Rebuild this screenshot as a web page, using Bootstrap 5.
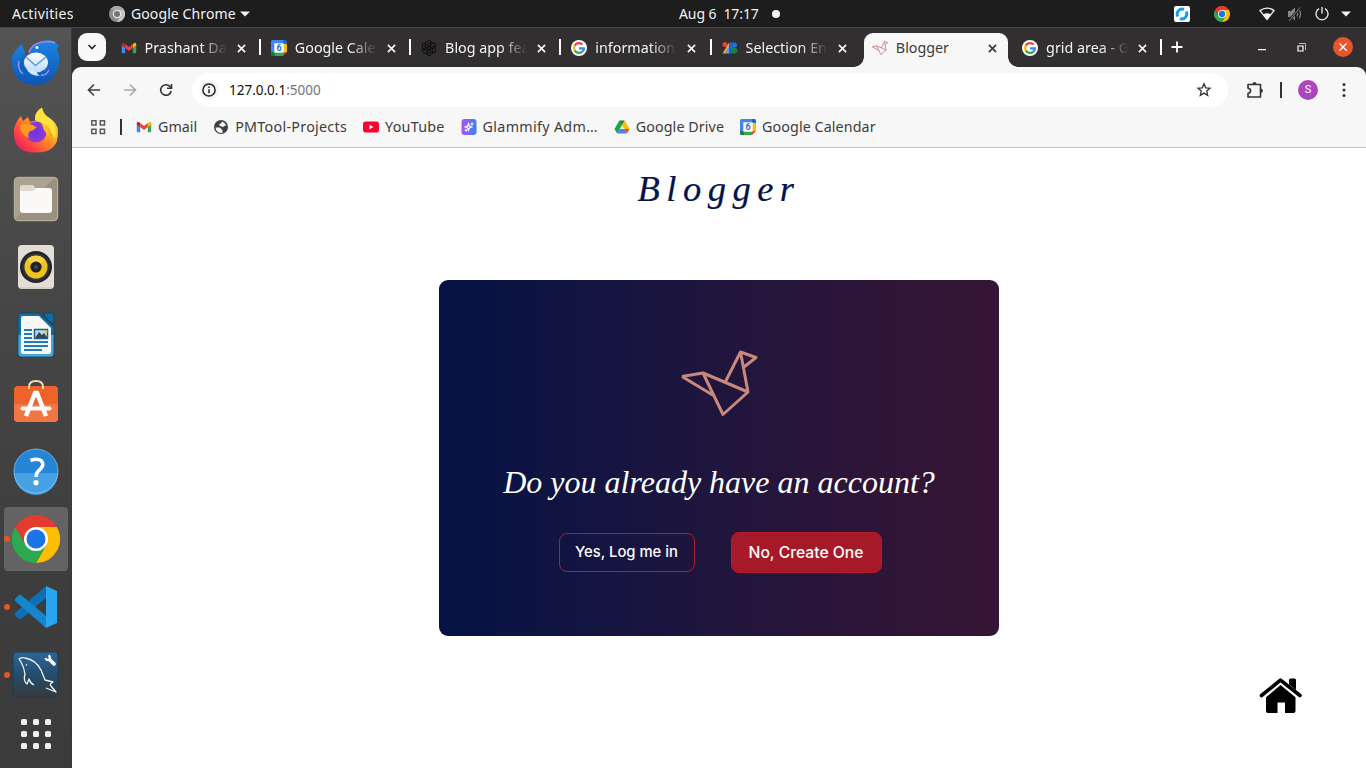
<!DOCTYPE html>
<html lang="en">
<head>
<meta charset="utf-8">
<meta name="viewport" content="width=device-width, initial-scale=1">
<title>Blogger</title>
<link href="https://cdn.jsdelivr.net/npm/bootstrap@5.3.0/dist/css/bootstrap.min.css" rel="stylesheet">
<style>
body{width:1366px;height:768px;overflow:hidden;font-family:"Noto Sans","Open Sans",sans-serif;font-size:14.3px;line-height:20px;color:#3c3c3c;background:#fff}
svg{display:block;flex:none}
.topbar{height:28px;background:#1d1d1d;color:#f2f2f2;border-bottom:1px solid #434343;padding-left:12px;font-size:14px}
.topbar .wide{letter-spacing:.35px}
.tray{width:196px}
.dock{width:72px;height:740px;background:linear-gradient(#545454,#484848 30%,#3d3d3d 75%,#3b3b3b);padding-top:1px;border-right:1px solid #383838}
.dock-item{height:68px;width:72px;position:relative}
.dock-item.hot::before{content:"";position:absolute;left:4px;top:2px;width:64px;height:64px;border-radius:4px;background:#636363}
.dock-item.run::after{content:"";position:absolute;left:4px;top:31px;width:6px;height:6px;border-radius:50%;background:#e95420}
.dock-item svg{position:relative}
.apps{height:50px}
.tabstrip{height:39px;background:#322f30;padding-left:6px;color:#f3f3f3}
.chev{width:28px;height:28px;border-radius:9px;background:#f8f8f8;margin:5px 6.6px 0 0}
.tab{width:144.25px;height:34px;margin-top:5px;padding:0 8px 4px;position:relative}
.tab .ttl{width:90px;margin:0 -10px 0 8px;white-space:nowrap}
.tab .fade-end{-webkit-mask-image:linear-gradient(90deg,#000 55px,transparent 82px);mask-image:linear-gradient(90deg,#000 55px,transparent 82px)}
.tab svg.x{margin-left:12px}
.tab.on{background:#f7f7f7;color:#3c3c3c;border-radius:9px 9px 0 0}
.tab.on::before,.tab.on::after{content:"";position:absolute;bottom:0;width:10px;height:10px}
.tab.on::before{left:-10px;background:radial-gradient(circle at 0 0,transparent 9.5px,#f7f7f7 10px)}
.tab.on::after{right:-10px;background:radial-gradient(circle at 100% 0,transparent 9.5px,#f7f7f7 10px)}
.gapbar{width:6px;height:16px;margin-top:11px;background:linear-gradient(#fff,#fff) center/2px 100% no-repeat}
.gapbar.off{background:none}
.winbtn{height:28px;margin-top:5px}
.toolbar-wrap{background:#322f30}
.toolrow{height:46px;background:#f7f7f7;border-radius:9px 9px 0 0;padding:0 15px 0 14px}
.omni{width:1036px;height:34px;border-radius:17px;background:#fff;margin-left:18px;padding:0 16px 0 7px}
.info{width:20px;height:20px;border-radius:50%;background:#f4f4f4}
.url{font-size:13.5px;margin-left:10px;color:#111}
.url span{color:#757575}
.vbar{width:2px;height:16px;background:#333}
.avatar{width:20px;height:20px;border-radius:50%;background:#ab47bc;color:#fff;font:11px/20px Roboto,sans-serif}
.marks{height:35px;background:#f7f7f7;border-bottom:1px solid #c4c4c4;padding:0 0 6px 18px}
.bm{margin-right:16px;white-space:nowrap}
.bm svg{margin-right:6px}
.ls-a{letter-spacing:.28px}
.ls-b{letter-spacing:.24px}
.ls-c{letter-spacing:.32px}
.ls-d{letter-spacing:.08px}
.sheet{height:620px;position:relative}
.brandline{font:italic 36.500px/46px "Liberation Serif",serif;letter-spacing:6.500px;color:#04134a;padding-top:18px;-webkit-text-stroke:.2px #04134a}
.ask{width:560px;height:356px;margin:68px auto 0;border-radius:9px;background:linear-gradient(90deg,#041344,#1c153f 42%,#2a1539 70%,#371534)}
.ask svg{margin-top:66px}
.question{font:italic 32px/40px "Liberation Serif",serif;color:#fff;margin:42px 0 0;white-space:nowrap}
.choices{gap:36px;margin:30px 0 0 2px}
.btn-pop{font-family:Inter,sans-serif;font-weight:500;color:#fff;border:1px solid #b41c2b;border-radius:8px;padding:0;white-space:nowrap}
.btn-yes{width:136px;height:39px;font-size:14.8px}
.btn-no{width:151px;height:41px;font-size:15.7px;background:#a61928}
.btn-pop:hover{color:#fff}
.home{position:absolute;left:1187px;top:529px}
</style>
</head>
<body>
<svg width="0" height="0" class="position-absolute" aria-hidden="true">
<defs>
<symbol id="chrome" viewBox="0 0 48 48"><path fill="#e33b2e" d="M3.2 12A24 24 0 0 1 44.8 12H24L13.6 30z"/><path fill="#fdbd00" d="M44.8 12A24 24 0 0 1 24 48L34.4 30 24 12z"/><path fill="#2da94f" d="M24 48A24 24 0 0 1 3.2 12L13.6 30 34.4 30z"/><circle cx="24" cy="24" r="12" fill="#fff"/><circle cx="24" cy="24" r="9.5" fill="#1a73e8"/></symbol>
<symbol id="gmail" viewBox="0 0 16 16"><path fill="#4285f4" d="M.8 5v7.3q0 1 1 1H4.200V7.500z"/><path fill="#34a853" d="M15.200 5v7.300q0 1-1 1H11.800V7.500z"/><path fill="#fbbc04" d="M11.800 4 13.300 2.900q1.900-.8 1.900 1.300V5.500L11.800 8z"/><path fill="#c5221f" d="M4.200 4 2.700 2.900Q.8 2.100.8 4.200V5.500L4.200 8z"/><path fill="#ea4335" d="M4.200 4 8 6.900 11.800 4V8L8 10.900 4.200 8z"/></symbol>
<symbol id="gcal" viewBox="0 0 16 16"><path fill="#4285f4" d="M1.500 0H12V4H4v8H0V1.500Q0 0 1.500 0z"/><path fill="#1967d2" d="M12 0h2.500Q16 0 16 1.500V4h-4z"/><path fill="#fbbc04" d="M12 4h4v8h-4z"/><path fill="#34a853" d="M4 12h8v4H4z"/><path fill="#188038" d="M0 12h4v4H1.500Q0 16 0 14.500z"/><path fill="#ea4335" d="M12 12h4l-4 4z"/><path fill="#fff" d="M3.300 3.300h9.400v9.400H3.300z"/><text x="8" y="11.400" font-size="9" font-weight="700" text-anchor="middle" fill="#1a73e8" font-family="Roboto,sans-serif">6</text></symbol>
<symbol id="goog" viewBox="0 0 16 16"><circle cx="8" cy="8" r="8" fill="#fff"/><g fill="none" stroke-width="2.300"><path stroke="#ea4335" d="M3.700 5.600A4.900 4.900 0 0 1 11.400 4.500"/><path stroke="#fbbc05" d="M3.700 10.400a4.900 4.900 0 0 1 0-4.800"/><path stroke="#34a853" d="M11.300 11.600a4.900 4.900 0 0 1-7.600-1.200"/><path stroke="#4285f4" d="M8 8.300h4.900a4.900 4.900 0 0 1-1.600 3.300"/></g></symbol>
<symbol id="bird" viewBox="0 0 76 66" overflow="visible"><path fill="none" stroke="currentColor" stroke-width="var(--w,3)" stroke-linejoin="round" d="M1 26.500 22 23 67 42 42 64.500 22 23M1 26.500 32.500 45.500M44 32.500 59.500 2 67 42M59.500 2 75 7.500 63 17"/></symbol>
<symbol id="x" viewBox="0 0 10 10"><path fill="none" stroke="currentColor" stroke-width="1.900" d="m1 1 8 8M9 1 1 9"/></symbol>
<linearGradient id="fx" x1="1" y1="0" x2="0" y2="1"><stop offset="0" stop-color="#fff36b"/><stop offset=".4" stop-color="#ffa51e"/><stop offset=".7" stop-color="#ff4b3b"/><stop offset="1" stop-color="#e5097c"/></linearGradient>
<radialGradient id="pu"><stop offset="0" stop-color="#6a35dd"/><stop offset="1" stop-color="#8f3bd6"/></radialGradient>
<linearGradient id="tb" x1="0" y1="0" x2="0" y2="1"><stop offset="0" stop-color="#1a86e6"/><stop offset="1" stop-color="#0e55ae"/></linearGradient>
<linearGradient id="en" x1="0" y1="0" x2="0" y2="1"><stop offset="0" stop-color="#fff"/><stop offset="1" stop-color="#b9dcfa"/></linearGradient>
<linearGradient id="my" x1="0" y1="0" x2="0" y2="1"><stop offset="0" stop-color="#2c6798"/><stop offset=".55" stop-color="#234a69"/><stop offset="1" stop-color="#39393a"/></linearGradient>
<linearGradient id="gl"><stop offset="0" stop-color="#a855f7"/><stop offset="1" stop-color="#3b82f6"/></linearGradient>
</defs>
</svg>

<header class="topbar d-flex align-items-center">
  <span class="wide" style="width:97px">Activities</span>
  <svg width="16" height="16" viewBox="0 0 16 16"><circle cx="8" cy="8" r="8" fill="#8d8d8d"/><path fill="#c4c4c4" d="M15 4a8 8 0 0 1-7 12l3.500-6L8 4z"/><path fill="#a9a9a9" d="M1.300 3.600A8 8 0 0 1 15 4H8z"/><circle cx="8" cy="8" r="4.200" fill="#e8e8e8"/><circle cx="8" cy="8" r="3" fill="#737373"/></svg>
  <span style="width:109px;margin-left:6px;letter-spacing:.1px">Google Chrome</span>
  <svg width="10" height="6" viewBox="0 0 10 6"><path fill="#f2f2f2" d="M0 .5h10L5 5.500z"/></svg>
  <span style="margin-left:429px;width:93px;white-space:pre;letter-spacing:-.1px">Aug 6  17:17</span>
  <svg width="8" height="8" viewBox="0 0 8 8"><circle cx="4" cy="4" r="4" fill="#f2f2f2"/></svg>
  <div class="tray ms-auto d-flex align-items-center">
    <svg width="16" height="16" viewBox="0 0 16 16" style="margin-left:4px"><rect width="16" height="16" rx="2" fill="#fff"/><g fill="none" stroke="#159cf0" stroke-width="2.800"><path d="M3.800 10.500A5 5 0 0 1 10 3.400"/><path d="M12.200 5.500A5 5 0 0 1 6 12.600"/></g></svg>
    <svg width="16" height="16" style="margin-left:24px"><use href="#chrome"/></svg>
    <svg width="16" height="14" viewBox="0 0 16 14" style="margin-left:29px"><path fill="none" stroke="#f2f2f2" stroke-width="1.300" d="M1 3.600q7-5 14 0L8 12.500z"/><path fill="#f2f2f2" d="M4.200 7.500q3.800-2.500 7.600 0L8 12.800z"/></svg>
    <svg width="16" height="16" viewBox="0 0 16 16" style="margin-left:12px"><path fill="#858585" d="M1 5h3l4-3.500v13L4 11H1z"/><path fill="none" stroke="#858585" stroke-width="1.200" d="M10 5.500q1.500 2.500 0 5M12 3.500q3 4.500 0 9"/><path stroke="#1d1d1d" stroke-width="2.500" d="M1.500 15 13 2"/><path stroke="#858585" d="M2 15 13 1.500"/></svg>
    <svg width="14" height="14" viewBox="0 0 14 14" style="margin-left:12px"><path fill="none" stroke="#f2f2f2" stroke-width="1.300" d="M4 1.600a6 6 0 1 0 6 0M7 0v6.500"/></svg>
    <svg width="10" height="6" viewBox="0 0 10 6" style="margin-left:12px"><path fill="#f2f2f2" d="M0 .5h10L5 5.500z"/></svg>
  </div>
</header>

<div class="d-flex">
<nav class="dock d-flex flex-column align-items-center flex-shrink-0">
  <div class="dock-item d-flex align-items-center justify-content-center"><svg width="48" height="48" viewBox="0 0 48 48"><path fill="url(#tb)" d="M0 17Q4 10 9 5q4 5 4 11l-1 4 6-5Q19 5 30 2q8-2 15 1l-2 1q3 1 4 4l-2 1q5 13-1 25-6 12-21 12Q6 46 1 31-1 22 0 17z"/><path fill="#0d61bd" d="M12 16q-4 9 2 16 6 7 16 5-10 6-18-1-9-9 0-20z"/><path fill="none" stroke="#9a86ef" stroke-width="1.600" d="M17 14q2-9 13-11 8-1 13 1M7 22q-2 8 4 13M37 31q-3 6-8 5"/><ellipse cx="24" cy="23.500" rx="12" ry="10" fill="url(#en)"/><path fill="#d2e9fd" d="M14 28q2 9 15 9-4-1-4-4z"/><path fill="none" stroke="#5b9bdb" stroke-width="1.400" d="m14 18 9.500 8.500L34 18"/><circle cx="25" cy="8.500" r="1.500" fill="#fff"/></svg></div>
  <div class="dock-item d-flex align-items-center justify-content-center"><svg width="48" height="48" viewBox="0 0 48 48"><path fill="url(#fx)" d="M2 22Q4 14 9 9l2 5 5-4 2 5q2-1 5-1 1-8 7-12.500 1 6 7 9 9 6 9 14 1 21-22 21Q1 46 2 25z"/><path fill="#ffe33d" d="M23 13q-1-8 7-12.500Q31 7 39 13q7 8 4 19l-7-13z"/><circle cx="24" cy="25" r="10.500" fill="url(#pu)"/><path fill="#ff9a1f" d="M8 18q7-2 13 0 2 2 4 2-4 4-7 4-3 3-1 7Q8 28 8 18z"/><path fill="#ffbd2c" d="M29 15q9 5 8 15l-5-7z"/></svg></div>
  <div class="dock-item d-flex align-items-center justify-content-center"><svg width="48" height="48" viewBox="0 0 48 48"><rect x="2.300" y="2.300" width="43.400" height="43.400" rx="4" fill="#9a927f" stroke="#c1baa6"/><path fill="#aaa28f" d="M3 44V6q0-3 3-3h36z"/><rect x="8" y="13" width="32" height="25" rx="3" fill="#faf9f7"/><path fill="#e0dacd" d="M8 16V12q0-2 2-2h10q2 0 2.500 2l1.500 2q-2 2-4 2z"/></svg></div>
  <div class="dock-item d-flex align-items-center justify-content-center"><svg width="48" height="48" viewBox="0 0 48 48"><rect x="6" y="2" width="36" height="44" rx="4" fill="#e3ded3"/><path d="M8 45h32" stroke="#c4beb2"/><circle cx="24" cy="24" r="16" fill="#23232d"/><circle cx="24" cy="24" r="13.500" fill="#34343c"/><circle cx="24" cy="24" r="11.500" fill="#efc21f"/><path fill="#f6d44a" d="M24 24 15 17a11.500 11.500 0 0 1 18 0z"/><circle cx="24" cy="24" r="5.600" fill="#202124"/><circle cx="24" cy="24" r="2" fill="#45484c"/></svg></div>
  <div class="dock-item d-flex align-items-center justify-content-center"><svg width="48" height="48" viewBox="0 0 48 48"><path fill="#0f6ea8" stroke="#174460" d="M9 2h18l15 14v27q0 3-3 3H9q-3 0-3-3V5q0-3 3-3z"/><path fill="#49a6d5" d="M6.500 24h35v18q0 3.500-3 3.500h-29q-3 0-3-3z"/><path fill="#f7f7f7" d="M11 5h16l12 12v24q0 2-2 2H11q-2 0-2-2V7q0-2 2-2z"/><path fill="#106aa0" stroke="#174460" d="M31 2h11v11q-7-3-11-11z"/><path stroke="#1d7db6" stroke-width="2" d="M12 19h8M12 23h8M12 27h8M12 31h24M12 35h24M12 39h18"/><path fill="#b5dcf2" stroke="#16608d" stroke-width="1.500" d="M22.500 18.500h13v9h-13z"/><path fill="#444" d="m23 27 4-6 3 3 2-2 3.500 5z"/><circle cx="34" cy="20.500" r="1.500" fill="#f0c51e"/></svg></div>
  <div class="dock-item d-flex align-items-center justify-content-center"><svg width="48" height="48" viewBox="0 0 48 48"><rect x="2" y="7" width="44" height="36" rx="4" fill="#f0622b"/><path fill="#f27643" d="M2 25h44v14q0 4-4 4H6q-4 0-4-4z"/><path fill="none" stroke="#f3ddac" stroke-width="2" d="M17 10V8q0-6 7-6t7 6v2"/><g fill="none" stroke="#fff" stroke-width="4.500"><path d="M14 37 23 14h2l9 23"/><path stroke-linecap="round" stroke-width="4" d="M10.500 29.500h27"/></g></svg></div>
  <div class="dock-item d-flex align-items-center justify-content-center"><svg width="48" height="48" viewBox="0 0 48 48"><circle cx="24" cy="24" r="22" fill="#2486d4"/><path fill="#46a0e2" d="M2 26h44a22 22 0 0 1-44 0z"/><circle cx="24" cy="24" r="22" fill="none" stroke="#8fc7ef" stroke-width=".7"/><path fill="none" stroke="#fff" stroke-width="3.500" d="M18.500 13.500q6.500-2.500 10.500 0 4 4-1 9-4 3-4 7.500"/><circle cx="24" cy="35.700" r="2.600" fill="#fff"/></svg></div>
  <div class="dock-item run hot d-flex align-items-center justify-content-center"><svg width="48" height="48"><use href="#chrome"/></svg></div>
  <div class="dock-item run d-flex align-items-center justify-content-center"><svg width="48" height="48" viewBox="0 0 48 48"><path fill="#0e6fb5" d="M34 3 3 30v2l4 4h2L34 15z"/><path fill="#1486cd" d="M34 45 3 18v-2l4-4h2L34 33z"/><path fill="#29a4ef" d="m34 3 11 5v32l-11 5z"/></svg></div>
  <div class="dock-item run d-flex align-items-center justify-content-center"><svg width="48" height="48" viewBox="0 0 48 48"><path fill="url(#my)" stroke="#1f3d57" d="M5 1h38q3 0 3 4v39q0 2-3 2H4q-3 0-3-3V5q0-4 4-4z"/><path fill="none" stroke="#eef4f8" stroke-width="1.300" stroke-linejoin="round" d="M22 34q-4-2-5-6l-2 5q-4-3-2-10-1-7-4-12l-2-3q3-2 6-1Q24 9 29 19l4 10q4 1 8 2-4 2-2 4l5 6-10-4"/><circle cx="14.500" cy="14" r=".8" fill="#fff"/><path stroke="#fff" stroke-width="3.600" stroke-linecap="round" d="m38 9 4 4"/><path fill="none" stroke="#fff" stroke-width="2.200" d="M33.500 7q1 3 4 1.500 1-3-1-4"/></svg></div>
  <div class="apps d-flex align-items-center justify-content-center"><svg width="30" height="30" viewBox="0 0 30 30" fill="#eee"><g id="r"><rect width="6" height="6" rx="1.500"/><rect x="12" width="6" height="6" rx="1.500"/><rect x="24" width="6" height="6" rx="1.500"/></g><use href="#r" y="12"/><use href="#r" y="24"/></svg></div>
</nav>

<div class="flex-grow-1">
  <div class="tabstrip d-flex align-items-start">
    <div class="chev d-flex align-items-center justify-content-center"><svg width="10" height="6" viewBox="0 0 10 6"><path fill="none" stroke="#222" stroke-width="1.600" d="m1.500 1 3.500 3.500L8.500 1"/></svg></div>
    <div class="tab d-flex align-items-center"><svg width="16" height="16"><use href="#gmail"/></svg><span class="ttl fade-end">Prashant Da</span><svg class="x" width="9" height="9"><use href="#x"/></svg></div><i class="gapbar"></i>
    <div class="tab d-flex align-items-center"><svg width="16" height="16"><use href="#gcal"/></svg><span class="ttl fade-end">Google Cale</span><svg class="x" width="9" height="9"><use href="#x"/></svg></div><i class="gapbar"></i>
    <div class="tab d-flex align-items-center"><svg width="16" height="16" viewBox="-8 -8 16 16"><g fill="none" stroke="#0c0c0c" stroke-width="1"><path id="pt" d="M-3-2.500V-4.500A3 3 0 0 1 2.500-6L-1.500-3.500V1.500"/><use href="#pt" transform="rotate(60)"/><use href="#pt" transform="rotate(120)"/><use href="#pt" transform="rotate(180)"/><use href="#pt" transform="rotate(240)"/><use href="#pt" transform="rotate(300)"/></g></svg><span class="ttl fade-end">Blog app fea</span><svg class="x" width="9" height="9"><use href="#x"/></svg></div><i class="gapbar"></i>
    <div class="tab d-flex align-items-center"><svg width="16" height="16"><use href="#goog"/></svg><span class="ttl fade-end">information</span><svg class="x" width="9" height="9"><use href="#x"/></svg></div><i class="gapbar"></i>
    <div class="tab d-flex align-items-center"><svg width="16" height="16" viewBox="0 0 16 16"><circle cx="3" cy="4.500" r="2.500" fill="#ea4335"/><path fill="#fa9d2a" d="M7 2.500v5L3.500 13.500H.500z"/><path fill="#4aa3f5" d="M7 6v7.500H3.500z"/><path fill="#1967d2" d="M7 2.500h4v11H7z"/><path fill="#1a73e8" d="M11 2.500h1.500a2.500 2.500 0 0 1 0 5H11z"/><circle cx="12.200" cy="10.500" r="3" fill="#18873c"/></svg><span class="ttl fade-end">Selection En</span><svg class="x" width="9" height="9"><use href="#x"/></svg></div><i class="gapbar off"></i>
    <div class="tab on d-flex align-items-center"><svg width="16" height="16" style="color:#c98f80;--w:4.500"><use href="#bird"/></svg><span class="ttl">Blogger</span><svg class="x" width="9" height="9"><use href="#x"/></svg></div><i class="gapbar off"></i>
    <div class="tab d-flex align-items-center"><svg width="16" height="16"><use href="#goog"/></svg><span class="ttl fade-end">grid area - G</span><svg class="x" width="9" height="9"><use href="#x"/></svg></div><i class="gapbar"></i>
    <div class="winbtn d-flex align-items-center flex-grow-1">
      <svg width="12" height="12" viewBox="0 0 12 12" style="margin-left:7px"><path stroke="#fff" stroke-width="1.800" d="M6 .500v11M.500 6h11"/></svg>
      <svg class="ms-auto" width="8" height="10" viewBox="0 0 8 10"><path fill="#fff" d="M0 7h8v1.200H0z"/></svg>
      <svg width="9" height="9" viewBox="0 0 9 9" style="margin:0 0 0 31px"><path fill="none" stroke="#fff" stroke-width="1.200" d="M1 3h5v5H1z"/><path fill="none" stroke="#bbb" d="M2 .500h6.500V7"/></svg>
      <svg width="20" height="20" viewBox="0 0 20 20" style="margin:0 13px 0 27px"><circle cx="10" cy="10" r="10" fill="#e9542b"/><path stroke="#fff" stroke-width="1.400" d="m6.300 6.300 7.400 7.400M13.700 6.300l-7.400 7.400"/></svg>
    </div>
  </div>

  <div class="toolbar-wrap"><div class="toolrow d-flex align-items-center">
    <svg width="16" height="14" viewBox="0 0 16 14"><path fill="none" stroke="#3d3d3d" stroke-width="1.600" d="M14 7H3M8 1.500 2.500 7 8 12.500"/></svg>
    <svg width="16" height="14" viewBox="0 0 16 14" style="margin-left:20px"><path fill="none" stroke="#a9a9a9" stroke-width="1.600" d="M2 7h11M8 1.500 13.500 7 8 12.500"/></svg>
    <svg width="16" height="16" viewBox="0 0 16 16" style="margin-left:20px"><path fill="none" stroke="#333" stroke-width="1.600" d="M13.200 9A5.300 5.300 0 1 1 12 4.500l1.500 1.500"/><path fill="none" stroke="#333" stroke-width="1.600" d="M13.500 2v4.300H9"/></svg>
    <div class="omni d-flex align-items-center">
      <div class="info d-flex align-items-center justify-content-center"><svg width="14" height="14" viewBox="0 0 14 14"><circle cx="7" cy="7" r="6.100" fill="none" stroke="#222" stroke-width="1.500"/><path stroke="#222" stroke-width="1.500" d="M7 6.200v4M7 3.500V5"/></svg></div>
      <div class="url">127.0.0.1<span>:5000</span></div>
      <svg class="ms-auto" width="16" height="16" viewBox="0 0 16 16"><path fill="none" stroke="#333" stroke-width="1.300" d="m8 1.800 1.700 4 4.300.4-3.300 2.900 1 4.300L8 11.100l-3.700 2.300 1-4.300L2 6.200l4.300-.4z"/></svg>
    </div>
    <svg width="18" height="18" viewBox="0 0 18 18" style="margin-left:18px"><path fill="none" stroke="#333" stroke-width="1.600" stroke-linejoin="round" d="M2 3.500h12.500V16H2v-3.800q2.600-.2 2.600-2.500T2 7.200z"/><path fill="#333" d="M6.500 3a2 2 0 0 1 4 0zM15 7.500a2.300 2.300 0 0 1 0 4.500z"/></svg>
    <i class="vbar" style="margin-left:16px"></i>
    <div class="avatar text-center" style="margin-left:16px">S</div>
    <svg width="4" height="16" viewBox="0 0 4 16" style="margin-left:24px" fill="#333"><circle cx="2" cy="2.500" r="1.500"/><circle cx="2" cy="8" r="1.500"/><circle cx="2" cy="13.500" r="1.500"/></svg>
  </div></div>

  <div class="marks d-flex align-items-center">
    <svg width="16" height="16" viewBox="0 0 16 16"><path fill="none" stroke="#5a5a5a" stroke-width="1.500" d="M1.800 1.800h4.200V6H1.800zM10.300 1.800h4.200V6h-4.200zM1.800 10.300h4.200v4.200H1.800zM10.300 10.300h4.200v4.200h-4.200z"/></svg>
    <i class="vbar" style="margin:0 14px"></i>
    <span class="bm d-flex align-items-center"><svg width="16" height="16"><use href="#gmail"/></svg>Gmail</span>
    <span class="bm ls-a d-flex align-items-center"><svg width="16" height="16" viewBox="0 0 16 16"><circle cx="8" cy="8" r="7" fill="#3d4043"/><path fill="#f7f7f7" d="M2.500 8.500h4q1.500 0 1.500 1.500l1.500 1v3Q3 14 2.500 8.500zM6.500 5q2-.5 2.500-2.500 3 1 4.200 4l-2 .5q-1 1.500-2.700.5-1-1-2.500-1z"/></svg>PMTool-Projects</span>
    <span class="bm ls-b d-flex align-items-center"><svg width="16" height="16" viewBox="0 0 16 16"><rect y="2.500" width="16" height="11" rx="2.800" fill="#f03"/><path fill="#fff" d="m6.500 5.700 4 2.300-4 2.300z"/></svg>YouTube</span>
    <span class="bm ls-c d-flex align-items-center"><svg width="16" height="16" viewBox="0 0 16 16"><rect x=".5" width="15" height="16" rx="3" fill="url(#gl)"/><path fill="none" stroke="#fff" stroke-width="1.100" d="M7.500 4.500 8.300 7l2.500 1-2.500 1-.8 2.500L6.700 9 4.200 8l2.500-1zM11 3.500v3M9.500 5h3M5 10v2.500M3.800 11.200h2.500"/></svg>Glammify Adm…</span>
    <span class="bm ls-d d-flex align-items-center"><svg width="16" height="16" viewBox="0 0 16 16"><path fill="#1ea446" d="M5.300 1.500 8 6.200 3.200 14.500.5 10z"/><path fill="#188038" d="M5.300 1.500h5.400L8 6.200z"/><path fill="#fbbc04" d="m10.700 1.500 4.800 8.500h-5.300L8 6.200z"/><path fill="#4285f4" d="M5.800 10h4.400l2.600 4.500H3.200z"/><path fill="#ea4335" d="M10.200 10h5.300l-2.700 4.500z"/></svg>Google Drive</span>
    <span class="bm ls-d d-flex align-items-center"><svg width="16" height="16"><use href="#gcal"/></svg>Google Calendar</span>
  </div>

  <main class="sheet">
    <h1 class="brandline text-center m-0">Blogger</h1>
    <section class="ask d-flex flex-column align-items-center">
      <svg width="84" height="74" viewBox="-4 -4 84 74" style="color:#c8897c"><use href="#bird" width="76" height="66"/></svg>
      <p class="question">Do you already have an account?</p>
      <div class="choices d-flex align-items-center">
        <button class="btn btn-pop btn-yes">Yes, Log me in</button>
        <button class="btn btn-pop btn-no">No, Create One</button>
      </div>
    </section>
    <svg class="home" width="44" height="37" viewBox="0 0 44 37"><path d="M30 3q0-1.500 1.500-1.500h4Q37 1.500 37 3v10l-7-5.700z"/><path fill="none" stroke="#000" stroke-width="3.600" stroke-linecap="round" stroke-linejoin="round" d="M2.500 18.500 21.500 3.200 41 18.500"/><path d="m21.500 8 15 12.300V34q0 2-2 2H26V25.500h-7.500V36H9q-2 0-2-2V20.300z"/></svg>
  </main>
</div>
</div>
<script src="https://cdn.jsdelivr.net/npm/bootstrap@5.3.0/dist/js/bootstrap.bundle.min.js"></script>
</body>
</html>
